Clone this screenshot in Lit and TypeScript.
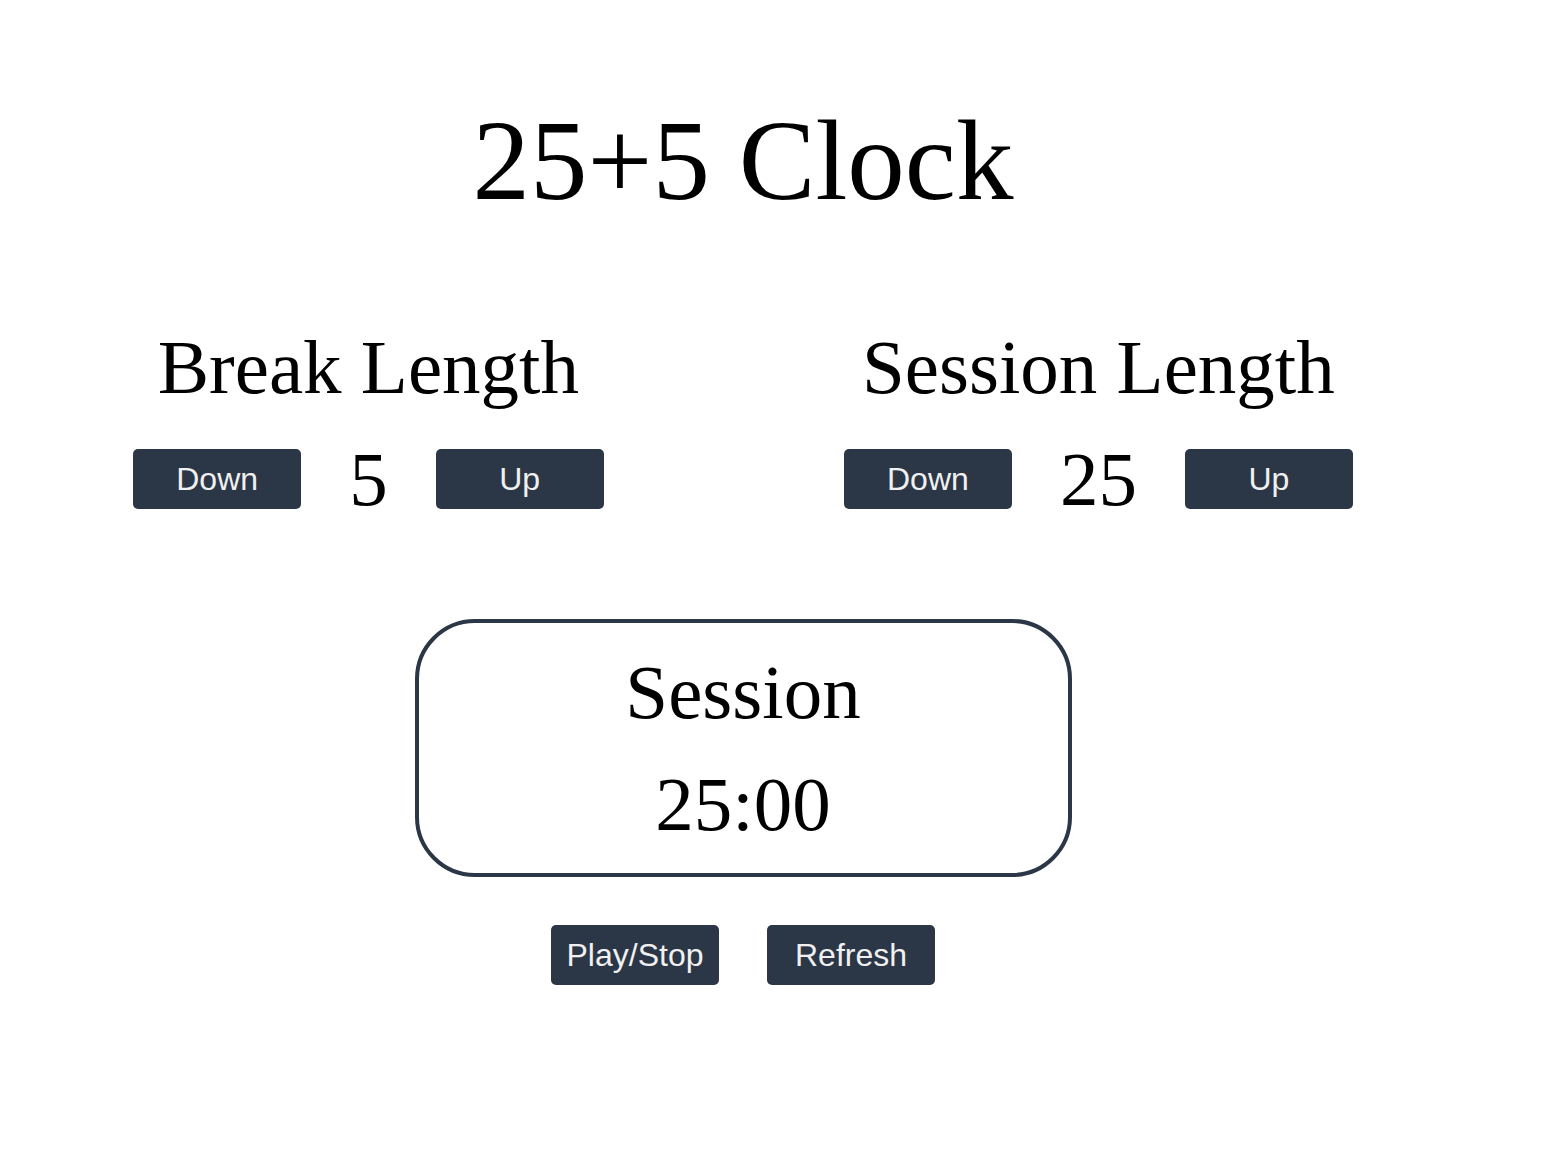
import { LitElement, html, css } from "lit";
import { customElement, state, property } from "lit/decorators.js";

@customElement("length-control")
class LengthControl extends LitElement {
  @property() label = "";
  @property({ type: Number }) value = 0;

  static styles = css`
    :host {
      display: block;
    }
    .group {
      display: flex;
      flex-direction: column;
      align-items: center;
      gap: 24px;
    }
    .label {
      margin: 0;
      font-size: 77px;
      line-height: 88px;
      font-weight: 400;
      white-space: nowrap;
    }
    .row {
      display: flex;
      align-items: center;
      gap: 48px;
    }
    .value {
      font-size: 77px;
      line-height: 88px;
    }
    .button {
      width: 168px;
      height: 60px;
      padding: 0;
      border: 0;
      border-radius: 5px;
      background: #2b3646;
      color: #f0f0f0;
      font: 32px "Liberation Sans", Arial, sans-serif;
      cursor: pointer;
    }
  `;

  private change(step: number) {
    this.dispatchEvent(new CustomEvent("step", { detail: step }));
  }

  render() {
    return html`
      <section class="group" aria-labelledby="label">
        <h2 class="label" id="label">${this.label}</h2>
        <div class="row">
          <button class="button" type="button" @click=${() => this.change(-1)}>Down</button>
          <span class="value">${this.value}</span>
          <button class="button" type="button" @click=${() => this.change(1)}>Up</button>
        </div>
      </section>
    `;
  }
}

@customElement("app-root")
class AppRoot extends LitElement {
  @state() private breakLength = 5;
  @state() private sessionLength = 25;
  @state() private seconds = 25 * 60;
  @state() private onBreak = false;
  private timer?: number;

  static styles = css`
    :host {
      display: block;
      color: #000;
      background: #fff;
      font-family: "Liberation Serif", "Times New Roman", serif;
    }
    .clock {
      display: flex;
      flex-direction: column;
      align-items: center;
      padding: 95px 83px 95px 13px;
    }
    .title {
      margin: 0 0 96px;
      font-size: 115px;
      line-height: 132px;
      font-weight: 400;
    }
    .lengths {
      display: flex;
      flex-wrap: wrap;
      justify-content: space-around;
      align-self: stretch;
      margin-bottom: 96px;
    }
    .timer {
      display: flex;
      flex-direction: column;
      align-items: center;
      gap: 24px;
      box-sizing: border-box;
      width: 45%;
      margin-bottom: 48px;
      padding: 25px 0;
      border: 4px solid #2b3646;
      border-radius: 60px;
    }
    .phase,
    .time {
      margin: 0;
      font-size: 77px;
      line-height: 88px;
      font-weight: 400;
    }
    .actions {
      display: flex;
      gap: 48px;
    }
    .button {
      width: 168px;
      height: 60px;
      padding: 0;
      border: 0;
      border-radius: 5px;
      background: #2b3646;
      color: #f0f0f0;
      font: 32px "Liberation Sans", Arial, sans-serif;
      cursor: pointer;
    }
  `;

  disconnectedCallback() {
    super.disconnectedCallback();
    this.stop();
  }

  private stop() {
    window.clearInterval(this.timer);
    this.timer = undefined;
  }

  private toggle() {
    if (this.timer !== undefined) {
      this.stop();
      return;
    }
    this.timer = window.setInterval(() => this.tick(), 1000);
  }

  private tick() {
    if (this.seconds > 0) {
      this.seconds -= 1;
      return;
    }
    this.onBreak = !this.onBreak;
    this.seconds = (this.onBreak ? this.breakLength : this.sessionLength) * 60;
  }

  private refresh() {
    this.stop();
    this.breakLength = 5;
    this.sessionLength = 25;
    this.onBreak = false;
    this.seconds = 25 * 60;
  }

  private clamp(minutes: number) {
    return Math.min(60, Math.max(1, minutes));
  }

  private stepBreak(e: CustomEvent<number>) {
    if (this.timer !== undefined) return;
    this.breakLength = this.clamp(this.breakLength + e.detail);
    if (this.onBreak) this.seconds = this.breakLength * 60;
  }

  private stepSession(e: CustomEvent<number>) {
    if (this.timer !== undefined) return;
    this.sessionLength = this.clamp(this.sessionLength + e.detail);
    if (!this.onBreak) this.seconds = this.sessionLength * 60;
  }

  private get time() {
    const pad = (n: number) => String(n).padStart(2, "0");
    return `${pad(Math.floor(this.seconds / 60))}:${pad(this.seconds % 60)}`;
  }

  render() {
    return html`
      <main class="clock">
        <h1 class="title">25+5 Clock</h1>
        <div class="lengths">
          <length-control label="Break Length" .value=${this.breakLength} @step=${this.stepBreak}></length-control>
          <length-control label="Session Length" .value=${this.sessionLength} @step=${this.stepSession}></length-control>
        </div>
        <section class="timer">
          <h2 class="phase">${this.onBreak ? "Break" : "Session"}</h2>
          <p class="time" role="timer">${this.time}</p>
        </section>
        <div class="actions">
          <button class="button" type="button" @click=${this.toggle}>Play/Stop</button>
          <button class="button" type="button" @click=${this.refresh}>Refresh</button>
        </div>
      </main>
    `;
  }
}
